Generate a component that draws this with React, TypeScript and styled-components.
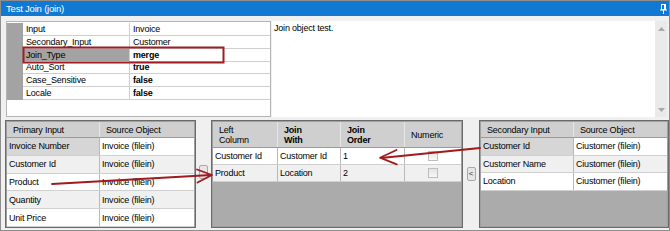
import React from "react";
import styled, { createGlobalStyle } from "styled-components";

const GlobalStyle = createGlobalStyle`
  html, body {
    margin: 0;
    padding: 0;
    background: #f0f0f0;
  }
  body {
    font-family: "Liberation Sans", Arial, sans-serif;
    font-size: 9px;
    letter-spacing: -0.2px;
    color: #000;
  }
`;

type Column = { label: string[]; bold?: boolean };

type GridData = {
  cols: string;
  headerHeight: number;
  rowHeight: number;
  columns: Column[];
  rows: string[][];
  checkCol?: boolean;
  currentCell?: boolean;
};

const propRows = [
  { name: "Input", value: "Invoice" },
  { name: "Secondary_Input", value: "Customer" },
  { name: "Join_Type", value: "merge", bold: true, selected: true },
  { name: "Auto_Sort", value: "true", bold: true },
  { name: "Case_Sensitive", value: "false", bold: true },
  { name: "Locale", value: "false", bold: true },
];

const primary: GridData = {
  cols: "93px 1fr",
  headerHeight: 15,
  rowHeight: 17.8,
  columns: [{ label: ["Primary Input"] }, { label: ["Source Object"] }],
  rows: [
    ["Invoice Number", "Invoice (filein)"],
    ["Customer Id", "Invoice (filein)"],
    ["Product", "Invoice (filein)"],
    ["Quantity", "Invoice (filein)"],
    ["Unit Price", "Invoice (filein)"],
  ],
  currentCell: true,
};

const joins: GridData = {
  cols: "65px 63px 64px 1fr",
  headerHeight: 25,
  rowHeight: 17,
  columns: [
    { label: ["Left", "Column"] },
    { label: ["Join", "With"], bold: true },
    { label: ["Join", "Order"], bold: true },
    { label: ["Numeric"] },
  ],
  rows: [
    ["Customer Id", "Customer Id", "1"],
    ["Product", "Location", "2"],
  ],
  checkCol: true,
};

const secondary: GridData = {
  cols: "93px 1fr",
  headerHeight: 15,
  rowHeight: 17.6,
  columns: [{ label: ["Secondary Input"] }, { label: ["Source Object"] }],
  rows: [
    ["Customer Id", "Ciustomer (filein)"],
    ["Customer Name", "Ciustomer (filein)"],
    ["Location", "Ciustomer (filein)"],
  ],
  currentCell: true,
};

function DataGrid({ data, width }: { data: GridData; width: number }) {
  return (
    <Frame $width={width}>
      <HeaderRow $cols={data.cols} $height={data.headerHeight}>
        {data.columns.map((c, i) => (
          <HeaderCell key={i} $bold={c.bold}>
            {c.label.map((l) => (
              <span key={l}>{l}</span>
            ))}
          </HeaderCell>
        ))}
      </HeaderRow>
      {data.rows.map((r, ri) => (
        <Row key={ri} $cols={data.cols} $height={data.rowHeight} $alt={ri % 2 === 1}>
          {r.map((v, ci) => (
            <Cell key={ci} $current={data.currentCell && ri === 0 && ci === 0}>
              {v}
            </Cell>
          ))}
          {data.checkCol && (
            <CheckCell>
              <CheckBox />
            </CheckCell>
          )}
        </Row>
      ))}
    </Frame>
  );
}

export default function App() {
  return (
    <Page>
      <GlobalStyle />
      <Window>
        <TitleBar>
          <Title>Test Join (join)</Title>
          <Dots />
          <svg width="7" height="10" viewBox="0 0 7 10">
            <rect x="1.5" y="0.5" width="4" height="5" fill="none" stroke="#fff" />
            <rect x="4" y="1" width="1" height="4" fill="#fff" />
            <line x1="0" y1="6" x2="7" y2="6" stroke="#fff" />
            <line x1="3.5" y1="6" x2="3.5" y2="10" stroke="#fff" />
          </svg>
        </TitleBar>
        <Body>
          <TopPanel>
            <PropertyGrid>
              {propRows.map((p) => (
                <PropRow key={p.name}>
                  <Gutter />
                  <PropName $selected={p.selected}>{p.name}</PropName>
                  <PropValue $bold={p.bold}>{p.value}</PropValue>
                </PropRow>
              ))}
            </PropertyGrid>
            <Description>Join object test.</Description>
            <ScrollBar>
              <svg width="7" height="4" viewBox="0 0 7 4">
                <polygon points="0,4 3.5,0 7,4" fill="#a8a8a8" />
              </svg>
              <svg width="7" height="4" viewBox="0 0 7 4">
                <polygon points="0,0 3.5,4 7,0" fill="#a8a8a8" />
              </svg>
            </ScrollBar>
          </TopPanel>
          <BottomPanel>
            <DataGrid data={primary} width={191} />
            <ButtonColumn $width={15} $top={45}>
              <MoveButton />
            </ButtonColumn>
            <DataGrid data={joins} width={252} />
            <ButtonColumn $width={16} $top={47}>
              <MoveButton>&lt;</MoveButton>
            </ButtonColumn>
            <DataGrid data={secondary} width={190} />
          </BottomPanel>
        </Body>
      </Window>
      <Annotations width="670" height="231" viewBox="0 0 670 231">
        <rect x="23.5" y="47.5" width="200" height="15" fill="none" stroke="#9e1c22" strokeWidth="2" />
        <g fill="none" stroke="#a01a1e" strokeWidth="1.8" strokeLinecap="round" strokeLinejoin="round">
          <line x1="52" y1="184" x2="211" y2="175" />
          <polyline points="197,169.5 212,175 197.5,182.5" />
          <line x1="480" y1="148" x2="381" y2="158" />
          <polyline points="396.5,150 380,157.7 396.8,164.3" />
        </g>
      </Annotations>
    </Page>
  );
}

const Page = styled.div`
  position: relative;
  width: 670px;
  height: 231px;
`;

const Window = styled.div`
  width: 670px;
  height: 231px;
  box-sizing: border-box;
  border: 1px solid #8e8e8e;
  background: #f0f0f0;
  display: flex;
  flex-direction: column;
  overflow: hidden;
`;

const TitleBar = styled.div`
  height: 15px;
  flex: none;
  background: #1279d3;
  color: #fff;
  display: flex;
  align-items: center;
  gap: 4px;
  padding: 0 2px 0 5px;
`;

const Title = styled.span`
  font-size: 9.5px;
  white-space: nowrap;
`;

const Dots = styled.div`
  flex: 1;
  height: 4px;
  background-image: radial-gradient(rgba(255, 255, 255, 0.55) 30%, transparent 45%);
  background-size: 2px 2px;
`;

const Body = styled.div`
  flex: 1;
  display: flex;
  flex-direction: column;
  gap: 3px;
  padding: 5px 1px 2px 4px;
`;

const TopPanel = styled.div`
  height: 96px;
  display: flex;
  padding-left: 1px;
`;

const PropertyGrid = styled.div`
  width: 265px;
  box-sizing: border-box;
  border: 1px solid #b4b4b4;
  background: #fff;
  padding-top: 1px;
`;

const PropRow = styled.div`
  display: grid;
  grid-template-columns: 16px 107px 1fr;
  height: 12.8px;
`;

const Gutter = styled.div`
  background: #a3a3a3;
`;

const PropName = styled.div<{ $selected?: boolean }>`
  background: ${(p) => (p.$selected ? "#a3a3a3" : "#fff")};
  border-bottom: 1px solid #cfcfcf;
  border-right: 1px solid #cfcfcf;
  padding-left: 3px;
  line-height: 12px;
  white-space: nowrap;
  overflow: hidden;
`;

const PropValue = styled.div<{ $bold?: boolean }>`
  border-bottom: 1px solid #cfcfcf;
  padding-left: 3px;
  line-height: 12px;
  font-weight: ${(p) => (p.$bold ? 700 : 400)};
  white-space: nowrap;
`;

const Description = styled.div`
  flex: 1;
  margin-left: 1px;
  background: #fff;
  padding: 2px 2px;
`;

const ScrollBar = styled.div`
  width: 12px;
  margin-right: 1px;
  background: #eaeaea;
  display: flex;
  flex-direction: column;
  justify-content: space-between;
  align-items: center;
  padding: 6px 0 5px;
  box-sizing: border-box;
`;

const BottomPanel = styled.div`
  height: 108px;
  display: flex;
`;

const Frame = styled.div<{ $width: number }>`
  width: ${(p) => p.$width}px;
  flex: none;
  box-sizing: border-box;
  border: 1px solid #6a6a6a;
  box-shadow: inset 0 0 0 1px #a0a0a0;
  padding: 1px;
  background: #ababab;
  overflow: hidden;
`;

const HeaderRow = styled.div<{ $cols: string; $height: number }>`
  display: grid;
  grid-template-columns: ${(p) => p.$cols};
  height: ${(p) => p.$height}px;
  background: #cfcfcf;
  border-bottom: 1px solid #9a9a9a;
`;

const HeaderCell = styled.div<{ $bold?: boolean }>`
  display: flex;
  flex-direction: column;
  justify-content: center;
  padding-left: 6px;
  line-height: 10px;
  font-weight: ${(p) => (p.$bold ? 700 : 400)};
  border-right: 1px solid #e6e6e6;
  white-space: nowrap;
  &:last-child {
    border-right: none;
  }
`;

const Row = styled.div<{ $cols: string; $height: number; $alt: boolean }>`
  display: grid;
  grid-template-columns: ${(p) => p.$cols};
  height: ${(p) => p.$height}px;
  box-sizing: border-box;
  background: ${(p) => (p.$alt ? "#f0f0f0" : "#fff")};
  border-bottom: 1px solid #d0d0d0;
`;

const Cell = styled.div<{ $current?: boolean }>`
  display: flex;
  align-items: center;
  padding-left: 2px;
  white-space: nowrap;
  overflow: hidden;
  border-right: 1px solid #b8b8b8;
  background: ${(p) => (p.$current ? "#d6d6d6" : "transparent")};
  &:last-child {
    border-right: none;
  }
`;

const CheckCell = styled.div`
  display: flex;
  align-items: center;
  justify-content: center;
`;

const CheckBox = styled.div`
  width: 10px;
  height: 10px;
  box-sizing: border-box;
  border: 1px solid #bdbdbd;
  background: linear-gradient(#e4e4e4, #f8f8f8);
`;

const ButtonColumn = styled.div<{ $width: number; $top: number }>`
  width: ${(p) => p.$width}px;
  flex: none;
  display: flex;
  justify-content: center;
  align-items: flex-start;
  padding-top: ${(p) => p.$top}px;
  box-sizing: border-box;
`;

const MoveButton = styled.div`
  width: 9px;
  height: 14px;
  box-sizing: border-box;
  border: 1px solid #a8a8a8;
  border-radius: 2px;
  background: #e6e6e6;
  font-size: 8px;
  line-height: 12px;
  text-align: center;
  color: #333;
`;

const Annotations = styled.svg`
  position: absolute;
  left: 0;
  top: 0;
  pointer-events: none;
`;
